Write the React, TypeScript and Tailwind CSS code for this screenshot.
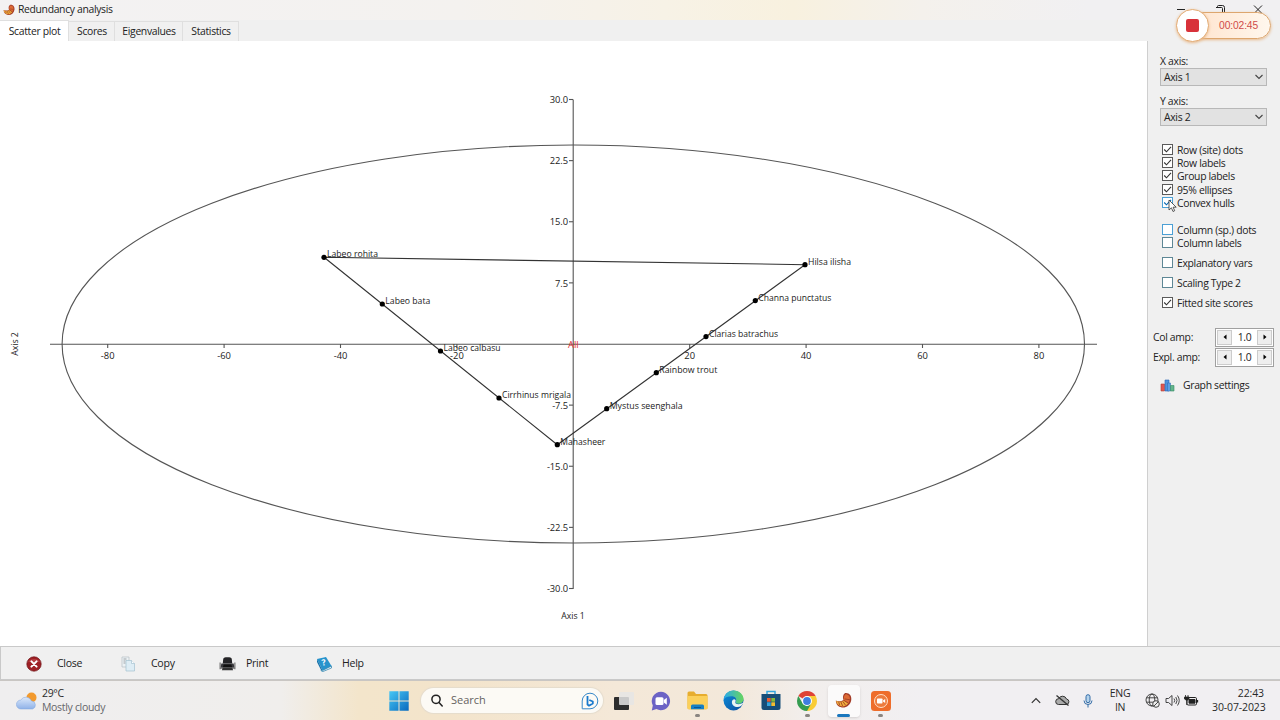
import { ReactNode } from "react";
import clsx from "clsx";

interface Species {
  name: string;
  x: number;
  y: number;
  w: number;
}

// pixel positions inside the plot canvas
const SPECIES: Species[] = [
  { name: "Labeo rohita",      x: 324, y: 216.3, w: 51 },
  { name: "Labeo bata",        x: 382.3, y: 263, w: 45 },
  { name: "Labeo calbasu",     x: 440.5, y: 310, w: 57 },
  { name: "Cirrhinus mrigala", x: 499, y: 357,   w: 69 },
  { name: "Mahasheer",         x: 557.3, y: 403.7, w: 45 },
  { name: "Mystus seenghala",  x: 606.7, y: 367.7, w: 73 },
  { name: "Rainbow trout",     x: 656.3, y: 331.7, w: 58 },
  { name: "Clarias batrachus", x: 706, y: 295.6, w: 69 },
  { name: "Channa punctatus",  x: 755.3, y: 259.6, w: 73 },
  { name: "Hilsa ilisha",      x: 805, y: 223.7, w: 43 },
];

const X_TICKS = [-80, -60, -40, -20, 20, 40, 60, 80];
const Y_TICKS = [30, 22.5, 15, 7.5, -7.5, -15, -22.5, -30];
const TABS: { label: string; width: string }[] = [
  { label: "Scatter plot", width: "w-[69px]" },
  { label: "Scores",       width: "w-[46px]" },
  { label: "Eigenvalues",  width: "w-[68px]" },
  { label: "Statistics",   width: "w-[56px]" },
];

const CX = 573;
const CY = 303;

function ScatterPlot() {
  return (
    <svg width="1147" height="605" className="block bg-white text-[9.4px]" fill="none" stroke="#555" strokeWidth="1.1">
      <ellipse cx={CX + 0.3} cy={CY} rx="511.2" ry="199" />
      <path d="M50 303.2H1097M573.2 58.5V548" />
      {X_TICKS.map((v) => (
        <g key={v}>
          <path d={`M${CX + 0.3 + v * 5.82} 303v4`} />
          <text x={CX + 0.3 + v * 5.82} y="318" textAnchor="middle" fill="#222" stroke="none">{v}</text>
        </g>
      ))}
      {Y_TICKS.map((v) => (
        <g key={v}>
          <path d={`M569 ${CY - v * 8.15}h4`} />
          <text x="568" y={CY - v * 8.15 + 3.7} textAnchor="end" fill="#222" stroke="none" letterSpacing="-.1">{v.toFixed(1)}</text>
        </g>
      ))}
      <path d="M324 216.3L805 223.7L557.3 403.7Z" stroke="#333" />
      {SPECIES.map((s) => (
        <g key={s.name} stroke="none">
          <circle cx={s.x} cy={s.y} r="2.6" fill="#000" />
          <text x={s.x + 3} y={s.y} textLength={s.w} lengthAdjust="spacingAndGlyphs" fill="#222">{s.name}</text>
        </g>
      ))}
      <text x="573.3" y="306.7" textAnchor="middle" fill="#e03030" stroke="none">All</text>
      <text x="573" y="578" textAnchor="middle" textLength="23.5" lengthAdjust="spacingAndGlyphs" fill="#222" stroke="none">Axis 1</text>
      <text transform="translate(18 303) rotate(-90)" textAnchor="middle" textLength="23.5" lengthAdjust="spacingAndGlyphs" fill="#222" stroke="none">Axis 2</text>
    </svg>
  );
}

function Check({ label, checked, hot, gap }: { label: string; checked?: boolean; hot?: boolean; gap?: string }) {
  return (
    <div className={clsx("flex h-[13.4px] items-center gap-1 pl-[2px]", gap)}>
      <svg width="11" height="11" viewBox="0 0 11 11" className="relative -top-[0.5px] shrink-0">
        <rect x=".5" y=".5" width="10" height="10" fill="#fff" stroke={hot ? "#4ba0d5" : checked ? "#5a5a5a" : "#5e8795"} />
        {checked && <path d="M2.2 5.5l2.3 2.3L9 2.8" fill="none" stroke={hot ? "#0868b0" : "#333"} strokeWidth="1.1" />}
      </svg>
      <span className="relative top-[0.5px] whitespace-nowrap">{label}</span>
    </div>
  );
}

function Select({ label, value, gap }: { label: string; value: string; gap: string }) {
  return (
    <div className={gap}>
      <div className="h-[14px] leading-[14px]">{label}</div>
      <div className="flex h-[18px] w-[107px] items-center justify-between border border-[#b8b8b8] bg-[#e2e2e2] px-[3px]">
        <span>{value}</span>
        <svg width="8" height="6" viewBox="0 0 8 6" fill="none" stroke="#444" strokeWidth="1.1"><path d="M.5 1L4 4.5L7.5 1" /></svg>
      </div>
    </div>
  );
}

function Spinner({ label, gap }: { label: string; gap: string }) {
  return (
    <div className={clsx("-ml-[7px] flex h-[19px] w-[121px] items-center justify-between", gap)}>
      <span>{label}</span>
      <div className="flex h-[19px] w-[59px] items-center justify-between border border-[#a0a0a0] bg-white p-px">
        <div className="flex h-[15px] w-[15px] items-center justify-center border border-[#ccc] bg-[#eee]">
          <svg width="4" height="6"><path d="M3.5 .5v5L.5 3z" fill="#000" /></svg>
        </div>
        <span>1.0</span>
        <div className="flex h-[15px] w-[15px] items-center justify-center border border-[#ccc] bg-[#eee]">
          <svg width="4" height="6"><path d="M.5 .5v5L3.5 3z" fill="#000" /></svg>
        </div>
      </div>
    </div>
  );
}

function Sidebar() {
  return (
    <aside className="flex w-[133px] shrink-0 flex-col border-l border-[#cfcfcf] bg-[#f0f0f0] pl-3 text-[10.4px] leading-[13px] tracking-[-0.32px] text-[#222]">
      <Select label="X axis:" value="Axis 1" gap="mt-[13px]" />
      <Select label="Y axis:" value="Axis 2" gap="mt-2" />
      <Check label="Row (site) dots" checked gap="mt-[17px]" />
      <Check label="Row labels" checked />
      <Check label="Group labels" checked />
      <Check label="95% ellipses" checked />
      <Check label="Convex hulls" checked hot />
      <Check label="Column (sp.) dots" hot gap="mt-[13px]" />
      <Check label="Column labels" />
      <Check label="Explanatory vars" gap="mt-[6.6px]" />
      <Check label="Scaling Type 2" gap="mt-[6.6px]" />
      <Check label="Fitted site scores" checked gap="mt-[6.6px]" />
      <Spinner label="Col amp:" gap="mt-[18px]" />
      <Spinner label="Expl. amp:" gap="mt-px" />
      <div className="mt-[12px] flex items-center gap-2">
        <svg width="15" height="13" viewBox="0 0 15 13" className="shrink-0">
          <path d="M1 5h3.500v7H1z" fill="#e0574f" stroke="#b33c38" strokeWidth=".6" />
          <path d="M5 1h4v11H5z" fill="#4e93dd" stroke="#2865b5" strokeWidth=".6" />
          <path d="M7.500 4h3v8h-3z" fill="#5c9fe3" stroke="#2865b5" strokeWidth=".5" />
          <path d="M10.500 6.500H14V12h-3.500z" fill="#62b58b" stroke="#388b65" strokeWidth=".6" />
        </svg>
        <span>Graph settings</span>
      </div>
    </aside>
  );
}

function PastLogo({ size }: { size: number }) {
  return (
    <svg width={size} height={size} viewBox="0 0 16 16">
      <path d="M9.5 1C13.500.5 15.800 3.500 15.300 7.500C14.500 12.500 10.500 15 6.500 14.500C3 14 .8 11.500.8 8C3 9.300 6 9 8 7.500C7 5 7.500 2.300 9.500 1z" fill="#a33b26" />
      <path d="M1 8.300C3.500 9.800 6.500 9.300 8.500 8L12.500 10.500C10.500 13 8 14 6 13.500C3.300 13 1.400 11 1 8.300z" fill="#f0ad3c" />
      <path d="M8.500 7.800C7.900 5 8.500 3 10 2C12.800 2 14.300 4.200 14 6.800C13.800 8.500 13.300 9.500 12.500 10.500z" fill="#dc6a35" />
      <path d="M8.500 8l4 2.500M7.300 8.800l2.700 3.700M5.500 9.300l1.700 4M3.500 9.200l.8 3M9 6.500l5 .8" fill="none" stroke="#9c3f22" strokeWidth=".8" />
    </svg>
  );
}

function Action({ label, width, icon = "w-[31px]", children }: { label: string; width: string; icon?: string; children: ReactNode }) {
  return (
    <div className={clsx("flex items-center", width)}>
      <div className={clsx("flex shrink-0", icon)}>{children}</div>
      <span>{label}</span>
    </div>
  );
}

function ActionBar() {
  return (
    <div className="flex h-[34px] shrink-0 items-center border-y border-l border-[#c9c9c9] bg-[#f0f0f0] pt-px pl-[25px] text-[10.6px] tracking-[-0.3px] text-[#222]">
      <Action label="Close" width="w-[94px]">
        <svg width="16" height="16" viewBox="0 0 16 16">
          <circle cx="8" cy="8" r="7.2" fill="#9e2025" stroke="#6f1418" strokeWidth=".7" />
          <path d="M2 6a6.5 5 0 0 1 12 0z" fill="#c45155" opacity=".6" />
          <path d="M5.4 5.4l5.2 5.2M10.6 5.4l-5.2 5.2" stroke="#fff" strokeWidth="2" strokeLinecap="round" />
        </svg>
      </Action>
      <Action label="Copy" width="w-[99px]">
        <svg width="16" height="16" viewBox="0 0 16 16" fill="#edf2f4" stroke="#b4bec4" strokeWidth=".7">
          <path d="M2 1h7v10H2z" />
          <path d="M3.5 3h3M3.5 5h2M3.5 7h2" stroke="#7a8288" />
          <path d="M6 4.5h5.5l3 3V15H6z" fill="#deedf5" stroke="#a3c1d0" />
          <path d="M11.5 4.5v3h3" fill="#fff" stroke="#a3c1d0" />
        </svg>
      </Action>
      <Action label="Print" width="w-[97px]" icon="w-[27px]">
        <svg width="17" height="16" viewBox="0 0 18 16">
          <path d="M4.500 2.500Q5 .8 7 .8h4q2 0 2.500 1.700L14 7.500H4z" fill="#242427" />
          <path d="M2.500 7.500h13l1 4.500h-15z" fill="#38383c" />
          <path d="M5 8.500h8l1 3H4z" fill="#111" />
          <path d="M1.200 6.500v7M16.800 6.500v7M1 12.500h16" stroke="#777" strokeWidth="1.300" />
          <path d="M4 12h10l1 2.5H3z" fill="#333" />
        </svg>
      </Action>
      <Action label="Help" width="w-[80px]" icon="w-[26px]">
        <svg width="17" height="16" viewBox="0 0 17 16">
          <path d="M1 3l9-2 5.5 9-9 4.5z" fill="#2793cc" />
          <path d="M1 3l5.5 11.5L5 14 1 6z" fill="#1772a9" />
          <path d="M6.5 14.5l9-4.5v2l-8.5 3.5q-2 0-2-1.5z" fill="#e4f2f8" stroke="#277eac" strokeWidth=".7" />
          <text x="6" y="9.5" fill="#fff" fontSize="8.5" fontWeight="bold" transform="rotate(-10 8 8)">?</text>
        </svg>
      </Action>
    </div>
  );
}

function TaskItem({ children, state }: { children: ReactNode; state?: "open" | "active" }) {
  return (
    <div className="relative flex h-[32px] w-[36.7px] shrink-0 items-center justify-center">
      {state === "active" && <div className="absolute inset-x-[2px] inset-y-0 rounded bg-white/70 shadow-sm" />}
      <div className="relative">{children}</div>
      {state && <div className={clsx("absolute bottom-0 h-[2.5px] rounded-full", state === "active" ? "w-[13px] bg-[#1976bd]" : "w-[5px] bg-[#8a8581]")} />}
    </div>
  );
}

function Taskbar() {
  return (
    <div className="flex h-[39px] shrink-0 items-center bg-[linear-gradient(90deg,#efeeef_0%,#f0eeec_22%,#f3e5cb_28%,#f3e4cb_35%,#f4e8d8_48%,#f3e8da_57%,#f2eeec_63%,#f1eff2_72%,#f1eff2_100%)] text-[#292929]">
      <div className="flex w-[381px] items-center pl-4">
        <svg width="22" height="20" viewBox="0 0 22 20">
          <defs>
            <linearGradient id="cloud" x2="0" y2="1"><stop stopColor="#dce9fb" /><stop offset="1" stopColor="#8fb2e8" /></linearGradient>
          </defs>
          <circle cx="15.5" cy="6.5" r="5" fill="#f29a2e" />
          <path d="M5 18a4.5 4.5 0 0 1-.2-9A6 6 0 0 1 15.5 10a4.1 4.1 0 0 1 1 8z" fill="url(#cloud)" stroke="#7fa5de" strokeWidth=".5" />
        </svg>
        <div className="ml-1 text-[10.5px] leading-[13.4px] tracking-[-0.32px]">
          <div>29°C</div>
          <div className="text-[#66666a]">Mostly cloudy</div>
        </div>
      </div>
      <TaskItem>
        <svg width="20" height="20" viewBox="0 0 20 20">
          <defs><linearGradient id="win" x2="1" y2="1"><stop stopColor="#47c7f5" /><stop offset="1" stopColor="#0869be" /></linearGradient></defs>
          <path d="M.3.3h9.2v9.2H.3zM10.5.3h9.2v9.2h-9.2zM.3 10.5h9.2v9.2H.3zM10.5 10.5h9.2v9.2h-9.2z" fill="url(#win)" />
        </svg>
      </TaskItem>
      <div className="mr-[2.5px] ml-[3.3px] flex h-[25px] w-[182px] shrink-0 items-center rounded-full bg-[#fcfaf5] pr-1 pl-[10px] shadow-[0_0_1px_1px_#e5dccd]">
        <svg width="12" height="13" viewBox="0 0 12 13" fill="none" stroke="#222" strokeWidth="1.5" strokeLinecap="round"><circle cx="5" cy="5.3" r="4.1" /><path d="M8 8.5l3.2 3.5" /></svg>
        <span className="ml-2 flex-1 text-[11px] text-[#65625f]">Search</span>
        <svg width="18" height="18" viewBox="0 0 18 18" fill="none">
          <path d="M1.2 16.5V9A7.8 7.8 0 1 1 9 16.8H1.2z" stroke="#3587c8" />
          <path d="M6.500 4v8.500l1.500 1.200 3.800-2.200V9.500L8.300 8" stroke="#1879cd" strokeWidth="1.8" strokeLinejoin="round" />
        </svg>
      </div>
      <TaskItem>
        <svg width="20" height="20" viewBox="0 0 20 20"><rect x="0" y="6" width="15" height="13" rx="1" fill="#2d2d2d" /><rect x="5" y="1" width="15" height="13" rx="1" fill="#e5e5e5" opacity=".85" /></svg>
      </TaskItem>
      <TaskItem>
        <svg width="20" height="20" viewBox="0 0 20 20"><path d="M10 .8a9.2 9.2 0 1 1-4.5 17.3L.8 19.5l1-5A9.3 9.3 0 0 1 10 .8z" fill="#6c63c5" /><rect x="4.5" y="6.3" width="8" height="7.6" rx="1.5" fill="#fff" /><path d="M12.800 9l3-2.300v7l-3-2.300z" fill="#fff" /></svg>
      </TaskItem>
      <TaskItem state="open">
        <svg width="21" height="19" viewBox="0 0 21 19"><path d="M.5 2q0-1.5 1.5-1.5h5L9 3h10q1.5 0 1.5 1.5V17q0 1.3-1.5 1.3H2Q.5 18.3.5 17z" fill="#e7ad2f" /><path d="M.5 5h20v12q0 1.3-1.5 1.3H2Q.5 18.3.5 17z" fill="#fbd05b" /><path d="M4 18.3V15q0-1.5 1.5-1.5h10q1.5 0 1.5 1.5v3.3z" fill="#1680c4" /><path d="M7 16.5h7" stroke="#0a5696" /></svg>
      </TaskItem>
      <TaskItem>
        <svg width="21" height="21" viewBox="0 0 21 21">
          <defs>
            <linearGradient id="edge" x2="1"><stop stopColor="#2aa9ea" /><stop offset="1" stopColor="#67d65d" /></linearGradient>
            <linearGradient id="edgeLow" x2="1" y2="1"><stop stopColor="#0d8fdc" /><stop offset="1" stopColor="#0b4f9e" /></linearGradient>
          </defs>
          <circle cx="10.5" cy="10.5" r="10" fill="url(#edgeLow)" />
          <path d="M.7 9.5C1.5 3.5 6 .5 10.5.5c6 0 10 4.200 10 8.500 0 3-2.500 4.800-5 4.800-2.300 0-3.300-1-2.600-2C14 8.500 12 6.300 8.500 6.300 5 6.300 2 7.500.7 9.500z" fill="url(#edge)" />
          <path d="M12.5 11.5c-.8 1.500.5 2.700 3 2.700 2 0 4-.8 5-2.200-.8 3.700-4 5.500-7 5C9.500 16.500 7.800 12.500 9.600 10c1.500-1.800 3.900-.5 2.900 1.500z" fill="#e9f5f2" />
        </svg>
      </TaskItem>
      <TaskItem>
        <svg width="20" height="21" viewBox="0 0 20 21"><path d="M6 5V1.500h8V5" fill="none" stroke="#34a6de" strokeWidth="1.5" /><path d="M.5 4h19v13.500q0 2.500-2.500 2.500H3Q.5 20 .5 17.500z" fill="#174e79" /><path d="M6 8h3.700v3.700H6z" fill="#ee5b32" /><path d="M10.300 8H14v3.700h-3.700z" fill="#85b93a" /><path d="M6 12.300h3.700V16H6z" fill="#34a5df" /><path d="M10.300 12.300H14V16h-3.700z" fill="#f3bd30" /></svg>
      </TaskItem>
      <TaskItem state="open">
        <svg width="20" height="20" viewBox="0 0 20 20">
          <path d="M10 10L1.340 5A10 10 0 0 1 18.660 5z" fill="#df4236" />
          <path d="M10 10V5h8.660A10 10 0 0 1 10 20z" fill="#f9cc35" />
          <path d="M10 20A10 10 0 0 1 1.340 5L5.700 12.500 10 15l4.300-2.500z" fill="#359c50" />
          <circle cx="10" cy="10" r="5" fill="#fff" /><circle cx="10" cy="10" r="3.9" fill="#3f7ee0" />
        </svg>
      </TaskItem>
      <TaskItem state="active"><PastLogo size={17} /></TaskItem>
      <TaskItem state="open">
        <svg width="20" height="20" viewBox="0 0 20 20"><rect width="20" height="20" rx="3.5" fill="#ee6d2b" /><circle cx="10" cy="10" r="6.5" fill="#ed7b3d" stroke="#ffe0c8" /><rect x="6" y="7.500" width="5.5" height="5" rx=".7" fill="#fff" /><path d="M12 9.500l2.200-1.600v4.200L12 10.500z" fill="#fff" /></svg>
      </TaskItem>
      <div className="ml-auto flex items-center pr-4 text-[10.5px] leading-[13.4px]">
        <svg width="10" height="7" viewBox="0 0 10 7" fill="none" stroke="#333" strokeWidth="1.2"><path d="M.8 5.800L5 1.500l4.200 4.300" /></svg>
        <svg width="15" height="13" viewBox="0 0 15 13" className="ml-[14px]" fill="#aaa" stroke="#333" strokeWidth="1"><path d="M3.500 10.500a2.900 2.900 0 0 1 .2-5.800A4.200 4.200 0 0 1 11.500 5a2.800 2.800 0 0 1 .2 5.500z" /><path d="M1.500 1.500l12 10" strokeWidth="1.3" /></svg>
        <svg width="10" height="14" viewBox="0 0 10 14" className="ml-[13px]" fill="none" stroke="#326ca7"><rect x="3" y=".7" width="4" height="8" rx="2" fill="#b5d3ec" /><path d="M1 6.500q0 4 4 4t4-4M5 10.500v3" /></svg>
        <div className="ml-[13px] w-[28px] text-center tracking-[-0.3px]"><div>ENG</div><div>IN</div></div>
        <svg width="15" height="15" viewBox="0 0 15 15" className="ml-[11px]" fill="none" stroke="#333" strokeWidth=".9"><circle cx="7" cy="7" r="6" /><ellipse cx="7" cy="7" rx="2.8" ry="6" /><path d="M1.500 4.800h11M1.500 9.200h7" /><circle cx="11" cy="11" r="3.3" fill="#eee" /><path d="M8.800 13.200l4.400-4.400" /></svg>
        <svg width="15" height="13" viewBox="0 0 15 13" className="ml-[5px]" fill="none" stroke="#333" strokeWidth=".9"><path d="M1 4.500h2.500L7 1.500v10l-3.500-3H1zM9 4.500q1.500 2 0 4M10.800 3q2.500 3.500 0 7M12.500 1.500q3.500 5 0 10" /></svg>
        <svg width="15" height="13" viewBox="0 0 15 13" className="ml-[4px]" fill="none" stroke="#222">
          <rect x="3" y="3.500" width="9.5" height="7.500" rx="1.2" />
          <path d="M5 5.500h6v3.700H5z" fill="#222" />
          <path d="M13.500 6v2.500" strokeWidth="1.300" />
          <path d="M1.500 1v2M4 1v2M.5 3h4.500v2L3.500 6H2L.5 5zM2.700 6v5" fill="#222" strokeWidth=".8" />
        </svg>
        <div className="ml-[13px] w-[52px] text-right tracking-[-0.12px] whitespace-nowrap"><div>22:43</div><div>30-07-2023</div></div>
      </div>
    </div>
  );
}

export default function App() {
  return (
    <div className="relative flex h-[720px] w-[1280px] flex-col overflow-hidden bg-white font-['Open_Sans',sans-serif]">
      {/* title bar */}
      <header className="flex h-5 shrink-0 items-center justify-between bg-[linear-gradient(90deg,#f3f2f3_0%,#f4f2ef_36%,#f7f2e6_52%,#f8f1df_62%,#f4f1ec_72%,#f1f0f2_85%)] pr-4 pl-[3px]">
        <div className="flex items-center gap-[3px]">
          <PastLogo size={12} />
          <span className="text-[10.4px] tracking-[-0.34px] text-[#222]">Redundancy analysis</span>
        </div>
        <svg width="88" height="12" viewBox="0 0 88 12" fill="none" stroke="#222">
          <path d="M1 5.5h8M40 3.500h5.500q1 0 1 1V11M41.500 3.500v-1q0-1 1-1h4q2 0 2 2v5M78 1.500l8 8M86 1.500l-8 8" />
        </svg>
      </header>

      {/* tabs */}
      <nav className="flex h-[21px] shrink-0 items-end bg-[#f0f0f0] text-[10.4px] tracking-[-0.34px] text-[#222]">
        {TABS.map((t, i) => (
          <div key={t.label} className={clsx("flex items-center justify-center border-t border-r border-[#dfdfdf] pt-px pl-px whitespace-nowrap", t.width, i === 0 ? "h-[21px] bg-white" : "h-5")}>
            {t.label}
          </div>
        ))}
      </nav>

      <main className="flex h-[605px] shrink-0">
        <ScatterPlot />
        <Sidebar />
      </main>
      <ActionBar />
      <div className="h-px shrink-0 bg-[#c9c6c3]" />
      <Taskbar />

      {/* screen recorder pill */}
      <div className="absolute top-[9px] left-[1176px] flex h-8 w-[95px] items-center">
        <div className="absolute top-[3px] right-0 left-3 flex h-[27px] items-center justify-end rounded-full border border-[#dda66e] bg-linear-to-r from-[#ffe3cc] to-[#fff7ed] pr-3 font-['Liberation_Sans',sans-serif] text-[10.3px] tracking-[-0.15px] text-[#cf4a49] shadow-[0_1px_3px_#e8b98a]">00:02:45</div>
        <div className="relative flex h-[33px] w-[33px] items-center justify-center rounded-full border border-[#e3ac75] bg-white shadow-[0_1px_3px_#e8b98a]">
          <div className="h-[13px] w-[13px] rounded-[2px] bg-[#d8323a]" />
        </div>
      </div>

      {/* mouse pointer */}
      <svg width="9" height="14" viewBox="0 0 9 14" className="absolute top-[199px] left-[1168px]">
        <path d="M1 1v10l2.400-2.200L5 12.500l1.700-.8L5.100 8.200H8.200z" fill="#fff" stroke="#333" strokeWidth=".8" />
      </svg>
    </div>
  );
}
